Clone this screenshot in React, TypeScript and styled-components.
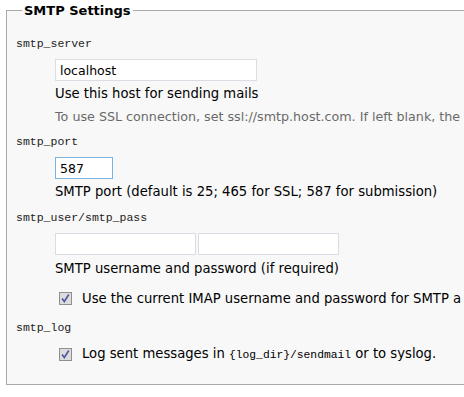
import React from 'react';
import styled, { createGlobalStyle } from 'styled-components';

const GlobalStyle = createGlobalStyle`
  html, body {
    margin: 0;
    padding: 0;
    background: #ffffff;
    overflow: hidden;
  }
  body {
    font-family: "DejaVu Sans", Verdana, sans-serif;
    font-size: 13px;
    color: #000;
  }
`;

const Fieldset = styled.fieldset`
  margin: 3px 0 0 6px;
  width: 520px;
  height: 382px;
  box-sizing: border-box;
  padding: 10px 0 0 9px;
  border: 1px solid #a9a9a9;
  border-right: none;
  background: #f8f8f8;
`;

const Legend = styled.legend`
  font-family: "DejaVu Sans", Verdana, sans-serif;
  font-weight: bold;
  font-size: 13px;
  padding: 0 2px;
  margin-left: 6px;
  color: #000;
`;

const Label = styled.div<{ $mt?: number }>`
  font-family: "Liberation Mono", "Courier New", monospace;
  font-size: 11.5px;
  color: #222;
  height: 14px;
  line-height: 14px;
  margin-top: ${p => p.$mt ?? 0}px;
`;

const Block = styled.div<{ $mt?: number }>`
  padding-left: 39px;
  margin-top: ${p => p.$mt ?? 0}px;
`;

const Inputs = styled.div`
  display: flex;
  gap: 2px;
`;

const Input = styled.input<{ $w: number; $focus?: boolean }>`
  width: ${p => p.$w}px;
  height: 22px;
  box-sizing: border-box;
  border: 1px solid ${p => (p.$focus ? '#7fb2dc' : '#d8dde3')};
  background: #fff;
  font-family: "DejaVu Sans", Verdana, sans-serif;
  font-size: 12.5px;
  color: #000;
  padding: 0 4px;
  margin: 0;
  outline: none;
`;

const Hint = styled.div<{ $gray?: boolean; $mt?: number }>`
  white-space: nowrap;
  color: ${p => (p.$gray ? '#6a6a6a' : '#000')};
  font-size: ${p => (p.$gray ? 12.7 : 13.2)}px;
  line-height: 15px;
  margin-top: ${p => p.$mt ?? 0}px;
`;

const CheckRow = styled.div<{ $mt?: number }>`
  display: flex;
  align-items: center;
  gap: 10px;
  padding-left: 4px;
  white-space: nowrap;
  font-size: 13.2px;
  line-height: 15px;
  margin-top: ${p => p.$mt ?? 0}px;
`;

const Box = styled.span`
  width: 13px;
  height: 13px;
  box-sizing: border-box;
  border: 1px solid #8f8f8f;
  background: #dcdcdc;
  display: inline-flex;
  align-items: center;
  justify-content: center;
  flex: none;
`;

const Code = styled.code`
  font-family: "Liberation Mono", "Courier New", monospace;
  font-size: 11.3px;
`;

const Check = () => (
  <Box>
    <svg width="11" height="11" viewBox="0 0 11 11">
      <path d="M2 5.5 L4.3 8.5 L8.8 1.5" stroke="#4b5aa0" strokeWidth="1.6" fill="none" />
    </svg>
  </Box>
);

export default function App() {
  return (
    <>
      <GlobalStyle />
      <Fieldset>
        <Legend>SMTP Settings</Legend>

        <Label $mt={9}>smtp_server</Label>
        <Block $mt={8}>
          <Input $w={202} defaultValue="localhost" />
          <Hint $mt={5}>Use this host for sending mails</Hint>
          <Hint $gray $mt={8}>
            To use SSL connection, set ssl://smtp.host.com. If left blank, the
          </Hint>
        </Block>

        <Label $mt={11}>smtp_port</Label>
        <Block $mt={8}>
          <Input $w={58} $focus defaultValue="587" />
          <Hint $mt={5}>SMTP port (default is 25; 465 for SSL; 587 for submission)</Hint>
        </Block>

        <Label $mt={12}>smtp_user/smtp_pass</Label>
        <Block $mt={8}>
          <Inputs>
            <Input $w={141} />
            <Input $w={141} />
          </Inputs>
          <Hint $mt={6}>SMTP username and password (if required)</Hint>
          <CheckRow $mt={15}>
            <Check />
            <span>Use the current IMAP username and password for SMTP a</span>
          </CheckRow>
        </Block>

        <Label $mt={15}>smtp_log</Label>
        <Block $mt={11}>
          <CheckRow>
            <Check />
            <span>
              Log sent messages in <Code>{'{log_dir}'}/sendmail</Code> or to syslog.
            </span>
          </CheckRow>
        </Block>
      </Fieldset>
    </>
  );
}
